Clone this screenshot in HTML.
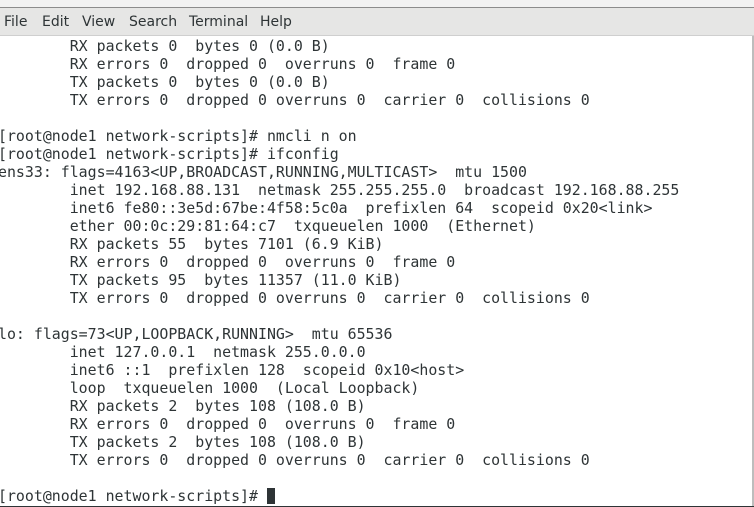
<!DOCTYPE html>
<html><head><style>
html,body{margin:0;padding:0;width:754px;height:507px;overflow:hidden;background:#fff}
.top{position:absolute;left:0;top:0;width:754px;height:7px;background:#f2f2f2;border-bottom:1px solid #8c8c8c}
.menu{position:absolute;left:0;top:8px;width:754px;height:27px;background:#e6e6e5;border-bottom:1px solid #cfcfcf;font-family:"DejaVu Sans","Liberation Sans",sans-serif;font-size:14px;color:#2e3436;line-height:29px}
.menu span{position:absolute;top:0}
.term{position:absolute;left:-2px;top:37px;margin:0;font-family:"DejaVu Sans Mono","Liberation Mono",monospace;font-size:14.9px;line-height:18px;color:#2e3436;white-space:pre}
.rb{position:absolute;right:0;top:36px;width:2px;height:471px;background:#bdbdbd}
.bb{position:absolute;left:0;bottom:0;width:754px;height:1px;background:#2e3436}
.cur{display:inline-block;width:8px;height:16px;background:#2e3436;vertical-align:-3px}
</style></head><body>
<div class="top"></div>
<div class="menu"><span style="left:4px">File</span><span style="left:42px">Edit</span><span style="left:82px">View</span><span style="left:129px">Search</span><span style="left:189px">Terminal</span><span style="left:260px">Help</span></div>
<pre class="term">        RX packets 0  bytes 0 (0.0 B)
        RX errors 0  dropped 0  overruns 0  frame 0
        TX packets 0  bytes 0 (0.0 B)
        TX errors 0  dropped 0 overruns 0  carrier 0  collisions 0

[root@node1 network-scripts]# nmcli n on
[root@node1 network-scripts]# ifconfig
ens33: flags=4163&lt;UP,BROADCAST,RUNNING,MULTICAST&gt;  mtu 1500
        inet 192.168.88.131  netmask 255.255.255.0  broadcast 192.168.88.255
        inet6 fe80::3e5d:67be:4f58:5c0a  prefixlen 64  scopeid 0x20&lt;link&gt;
        ether 00:0c:29:81:64:c7  txqueuelen 1000  (Ethernet)
        RX packets 55  bytes 7101 (6.9 KiB)
        RX errors 0  dropped 0  overruns 0  frame 0
        TX packets 95  bytes 11357 (11.0 KiB)
        TX errors 0  dropped 0 overruns 0  carrier 0  collisions 0

lo: flags=73&lt;UP,LOOPBACK,RUNNING&gt;  mtu 65536
        inet 127.0.0.1  netmask 255.0.0.0
        inet6 ::1  prefixlen 128  scopeid 0x10&lt;host&gt;
        loop  txqueuelen 1000  (Local Loopback)
        RX packets 2  bytes 108 (108.0 B)
        RX errors 0  dropped 0  overruns 0  frame 0
        TX packets 2  bytes 108 (108.0 B)
        TX errors 0  dropped 0 overruns 0  carrier 0  collisions 0

[root@node1 network-scripts]# <span class="cur"></span></pre>
<div class="rb"></div>
<div class="bb"></div>
</body></html>
